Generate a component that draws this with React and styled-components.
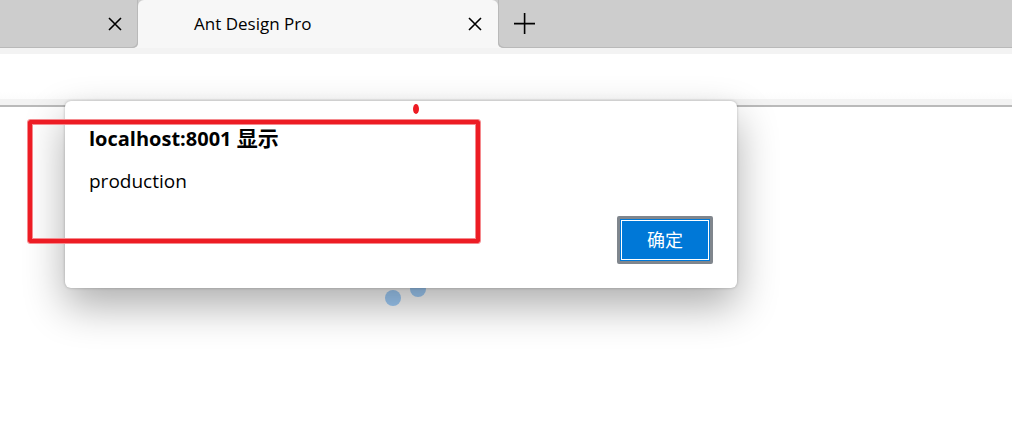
import React from "react";
import styled, { createGlobalStyle } from "styled-components";

const GlobalStyle = createGlobalStyle`
  *, *::before, *::after { box-sizing: border-box; }
  body {
    margin: 0;
    background: #fff;
    color: #000;
    font-family: "Open Sans", "Noto Sans CJK SC", sans-serif;
  }
`;

const Browser = styled.div`
  position: relative;
  display: flex;
  flex-direction: column;
  min-height: 100vh;
  overflow: hidden;
`;

const TabStrip = styled.header`
  display: flex;
  height: 48px;
  background: #f7f7f7;
`;

const Tab = styled.div`
  display: flex;
  align-items: center;
  flex: none;
  height: 48px;
  width: ${(p) => (p.$active ? "360px" : "138px")};
  padding: 0 13px 0 56px;
  border-radius: ${(p) => (p.$active ? "6px 6px 0 0" : "0 0 5px 0")};
  background: ${(p) => (p.$active ? "#f7f7f7" : "#cdcdcd")};
  box-shadow: ${(p) => (p.$active ? "none" : "inset -1px -1px 0 #b9b9b9")};
`;

const ActiveSlot = styled.div`
  flex: none;
  background: linear-gradient(#cdcdcd 8px, #f7f7f7 8px);
`;

const TabTitle = styled.span`
  font-size: 17px;
  line-height: 24px;
  white-space: nowrap;
`;

const StripRest = styled.div`
  display: flex;
  align-items: center;
  flex: 1;
  padding-left: 13px;
  border-radius: 0 0 0 5px;
  background: #cdcdcd;
  box-shadow: inset 1px -1px 0 #b9b9b9;
`;

const IconButton = styled.button`
  display: flex;
  align-items: center;
  justify-content: center;
  flex: none;
  width: ${(p) => p.$size}px;
  height: ${(p) => p.$size}px;
  margin: 0 0 0 auto;
  padding: 0;
  border: 0;
  background: none;
  color: #000;
`;

const NewTabButton = styled(IconButton)`
  margin: 0;
`;

const Toolbar = styled.div`
  height: 59px;
  border-top: 6px solid #f3f3f3;
  border-bottom: 2px solid #bababa;
  background: linear-gradient(#fff 38px, #fcfcfc 45px, #f3f3f3 45px);
`;

const Viewport = styled.main`
  position: relative;
  flex: 1;
`;

const Spinner = styled.svg`
  position: absolute;
  top: 174px;
  left: 384px;
`;

const Dialog = styled.section`
  position: absolute;
  top: 101px;
  left: 65px;
  display: flex;
  flex-direction: column;
  width: 672px;
  max-width: calc(100% - 80px);
  padding: 24px;
  border-radius: 6px;
  background: #fff;
  box-shadow: 0 0 3px rgba(0, 0, 0, 0.25), 0 18px 42px rgba(0, 0, 0, 0.32);
`;

const DialogTitle = styled.h1`
  margin: 0;
  font-size: 20px;
  font-weight: 700;
  line-height: 28px;
`;

const TitleSuffix = styled.span`
  font-size: 21px;
  line-height: 20px;
`;

const Message = styled.p`
  margin: 14px 0 0;
  font-size: 19px;
  line-height: 28px;
`;

const ConfirmButton = styled.button`
  align-self: flex-end;
  width: 96px;
  height: 48px;
  margin-top: 21px;
  padding: 0 0 2px;
  border: 3px solid #80868d;
  border-radius: 2px;
  background: #0078d7;
  background-clip: padding-box;
  box-shadow: inset 0 0 0 1px #0078d7, inset 0 0 0 2px #fff;
  color: #fff;
  font: 18px/24px "Noto Sans CJK SC", sans-serif;
`;

const Highlight = styled.div`
  position: absolute;
  top: 119px;
  left: 27px;
  width: 454px;
  height: 125px;
  border: 1px solid #f58a8e;
  border-radius: 3px;
  box-shadow: inset 0 0 0 4px #ed1c24, inset 0 0 0 5px #f58a8e;
  pointer-events: none;
`;

const Dot = styled.div`
  position: absolute;
  top: 104px;
  left: 413px;
  width: 6px;
  height: 10px;
  border-radius: 50%;
  background: #ed1c24;
`;

const CloseIcon = () => (
  <svg width="14" height="14" viewBox="0 0 14 14" fill="none" stroke="currentColor" strokeWidth="1.6">
    <path d="M1 1L13 13M13 1L1 13" />
  </svg>
);

const PlusIcon = () => (
  <svg width="22" height="22" viewBox="0 0 22 22" fill="none" stroke="currentColor" strokeWidth="1.6">
    <path d="M0 10.6H21M10.6 0V21" />
  </svg>
);

export default function App() {
  return (
    <Browser>
      <GlobalStyle />
      <TabStrip>
        <Tab>
          <IconButton $size={20} aria-label="Close tab"><CloseIcon /></IconButton>
        </Tab>
        <ActiveSlot>
          <Tab $active>
            <TabTitle>Ant Design Pro</TabTitle>
            <IconButton $size={20} aria-label="Close Ant Design Pro"><CloseIcon /></IconButton>
          </Tab>
        </ActiveSlot>
        <StripRest>
          <NewTabButton $size={28} aria-label="New tab"><PlusIcon /></NewTabButton>
        </StripRest>
      </TabStrip>
      <Toolbar />
      <Viewport>
        <Spinner width="44" height="28" viewBox="0 0 44 28" fill="#a2cffa" aria-hidden="true">
          <circle cx="9" cy="17" r="8" />
          <circle cx="34" cy="8" r="8" />
        </Spinner>
      </Viewport>
      <Dialog role="alertdialog" aria-labelledby="dialog-title" aria-describedby="dialog-message">
        <DialogTitle id="dialog-title">localhost:8001 <TitleSuffix lang="zh-CN">显示</TitleSuffix></DialogTitle>
        <Message id="dialog-message">production</Message>
        <ConfirmButton lang="zh-CN">确定</ConfirmButton>
      </Dialog>
      <Highlight />
      <Dot />
    </Browser>
  );
}
